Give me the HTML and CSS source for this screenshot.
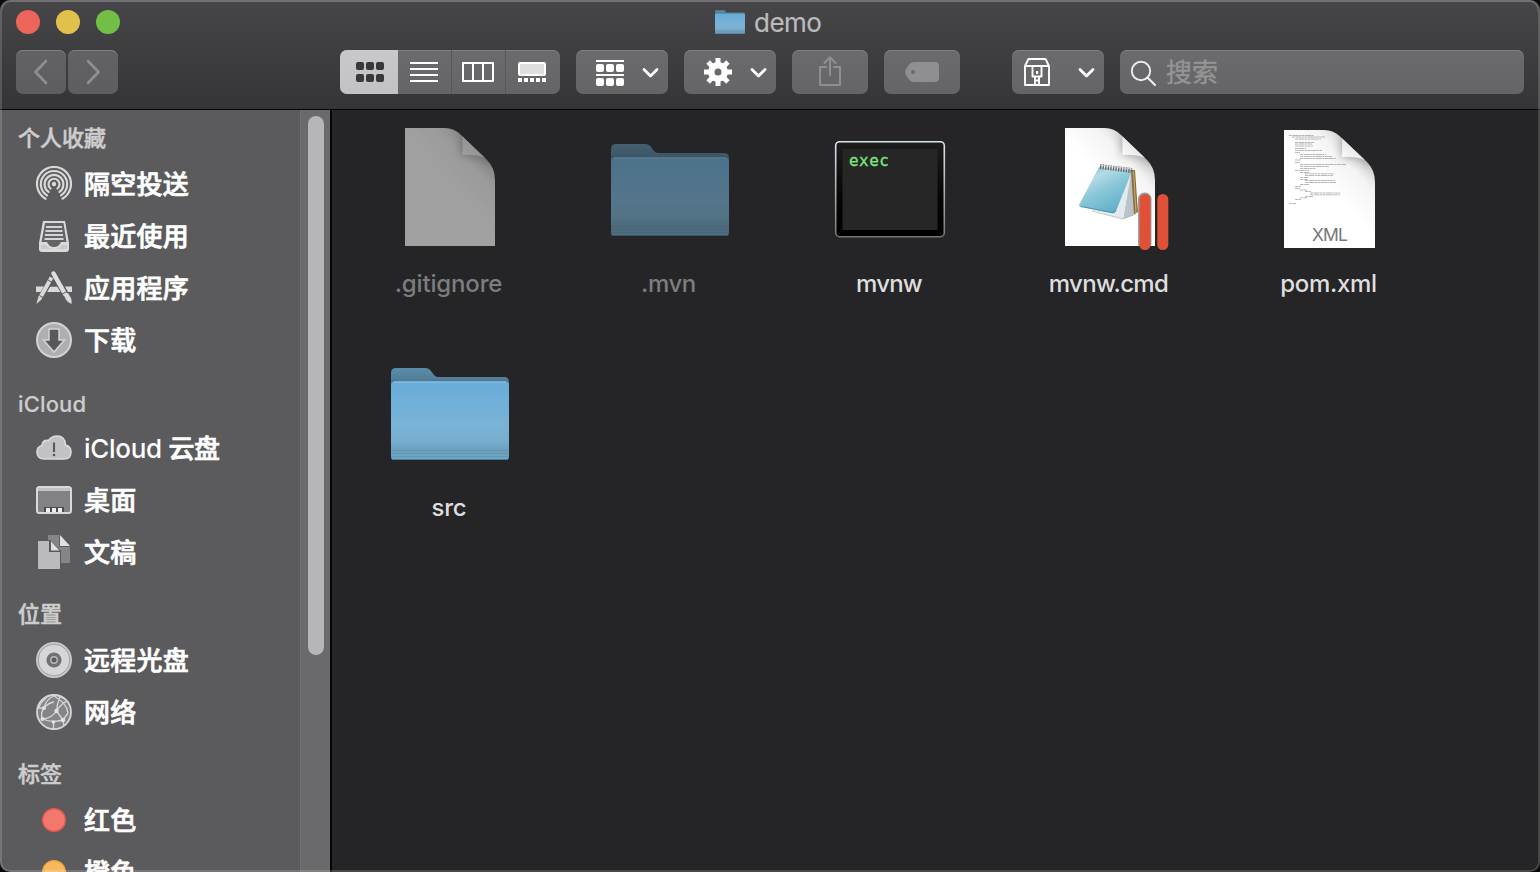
FILE: index.html
```html
<!DOCTYPE html>
<html lang="zh-CN">
<head>
<meta charset="utf-8">
<title>demo</title>
<link rel="stylesheet" href="styles.css">
</head>
<body>
<svg class="defs" width="0" height="0" aria-hidden="true">
  <defs>
    <linearGradient id="folderFront" x1="0" y1="0" x2="0" y2="1">
      <stop offset="0" stop-color="#68acd9"/><stop offset=".55" stop-color="#7ab3d6"/><stop offset=".76" stop-color="#76aecf"/><stop offset=".87" stop-color="#6c9fbc"/><stop offset="1" stop-color="#6fa6c4"/>
    </linearGradient>
    <linearGradient id="folderBack" x1="0" y1="0" x2="0" y2="1">
      <stop offset="0" stop-color="#5b8cab"/><stop offset=".25" stop-color="#53809b"/><stop offset=".4" stop-color="#4c7288"/><stop offset="1" stop-color="#4c7288"/>
    </linearGradient>
    <linearGradient id="paper" x1="0" y1="1" x2=".75" y2=".1">
      <stop offset=".6" stop-color="#fff"/><stop offset=".85" stop-color="#f4f4f4"/><stop offset="1" stop-color="#cfcfcf"/>
    </linearGradient>
    <linearGradient id="curl" x1="0" y1="1" x2=".6" y2=".4">
      <stop offset="0" stop-color="#fff"/><stop offset="1" stop-color="#e4e4e4"/>
    </linearGradient>
    <filter id="soft" x="-50%" y="-50%" width="200%" height="200%"><feGaussianBlur stdDeviation="4"/></filter>
    <clipPath id="paperClip"><path d="M0 0H40Q49 0 56 7L82 32Q90 40 90 52V118H0Z"/></clipPath>
    <symbol id="folder" viewBox="0 0 118 94" preserveAspectRatio="none">
      <path d="M0 6Q0 1 5 1H34Q38 1 40 4L43 8Q44.500 10 47 10H113Q118 10 118 15V40H0Z" fill="url(#folderBack)"/>
      <rect y="14.500" width="118" height="78.500" rx="3.500" fill="url(#folderFront)"/>
      <path d="M3 15H115" stroke="#91c9eb" stroke-width="1"/>
      <path d="M0 83.500H118M0 86.500H118M0 89.500H118" stroke="#6297b5" stroke-width="1"/>
      <path d="M1.500 92.500H116.500" stroke="#477d9d" stroke-width="1"/>
    </symbol>
    <symbol id="document" viewBox="0 0 90 118" preserveAspectRatio="none">
      <g clip-path="url(#paperClip)">
        <path d="M0 0H90V118H0Z" fill="url(#paper)"/>
        <path d="M56 4V28Q74 26 88 40V25Z" fill="#777" opacity=".5" filter="url(#soft)"/>
      </g>
      <path d="M57.500 8.500V27Q70 26 80 30Z" fill="url(#curl)"/>
    </symbol>
    <linearGradient id="exec" x1="0" y1="0" x2="0" y2="1"><stop offset="0" stop-color="#1d1d1d"/><stop offset=".6" stop-color="#050505"/><stop offset="1" stop-color="#000"/></linearGradient>
    <linearGradient id="execRim" x1="0" y1="0" x2="0" y2="1"><stop offset="0" stop-color="#dbe6ef"/><stop offset=".4" stop-color="#b4bac0"/><stop offset="1" stop-color="#777"/></linearGradient>
    <linearGradient id="pad" x1="0" y1="0" x2=".6" y2="1"><stop offset="0" stop-color="#6fb4c8"/><stop offset=".3" stop-color="#b4dbe6"/><stop offset=".55" stop-color="#8cc8d8"/><stop offset="1" stop-color="#5fb0c8"/></linearGradient>
  </defs>
</svg>

<div class="window">
  <header class="header">
    <div class="titlebar">
      <div class="lights"><span class="light close"></span><span class="light minimize"></span><span class="light maximize"></span></div>
      <div class="title"><svg class="title-icon" viewBox="0 0 118 94" preserveAspectRatio="none"><use href="#folder" width="118" height="94"/></svg><span class="title-text">demo</span></div>
    </div>
    <nav class="toolbar">
      <div class="nav-buttons">
        <button class="btn nav"><svg viewBox="16 50 50 44"><path d="M46 61L35.500 72L46 83" class="stroke dim" stroke-width="2.600"/></svg></button>
        <button class="btn nav"><svg viewBox="68 50 50 44"><path d="M88 61L98.500 72L88 83" class="stroke dim" stroke-width="2.600"/></svg></button>
      </div>
      <div class="btn views">
        <div class="view selected"><svg viewBox="340 50 58 44"><g fill="#38383a"><rect x="356" y="62" width="8" height="8" rx="2"/><rect x="366" y="62" width="8" height="8" rx="2"/><rect x="376" y="62" width="8" height="8" rx="2"/><rect x="356" y="74" width="8" height="8" rx="2"/><rect x="366" y="74" width="8" height="8" rx="2"/><rect x="376" y="74" width="8" height="8" rx="2"/></g></svg></div>
        <div class="view"><svg viewBox="398 50 54 44"><path d="M410 63H438M410 69H438M410 75H438M410 81H438" stroke="#fff" stroke-width="2"/></svg></div>
        <div class="view"><svg viewBox="452 50 54 44"><path d="M463 63H493V81H463ZM473 63V81M483 63V81" class="stroke" stroke-width="2"/></svg></div>
        <div class="view"><svg viewBox="506 50 54 44"><rect x="519" y="63" width="26" height="12" rx="1" fill="#dededf" stroke="#fff" stroke-width="2"/><path d="M518 80H546" stroke="#fff" stroke-width="4" stroke-dasharray="4 2"/></svg></div>
      </div>
      <button class="btn menu"><svg viewBox="576 50 92 44"><path d="M596 61H624M596 75H624" stroke="#fff" stroke-width="2"/><g fill="#fff"><rect x="596" y="64" width="8" height="8" rx="2"/><rect x="606" y="64" width="8" height="8" rx="2"/><rect x="616" y="64" width="8" height="8" rx="2"/><rect x="596" y="78" width="8" height="8" rx="2"/><rect x="606" y="78" width="8" height="8" rx="2"/><rect x="616" y="78" width="8" height="8" rx="2"/></g><path d="M644 69.500L650.500 76L657 69.500" class="stroke" stroke-width="2.800"/></svg></button>
      <button class="btn menu"><svg viewBox="684 50 92 44"><g stroke="#fff" stroke-width="5"><path d="M718 58V66M718 78V86M704 72H712M724 72H732M708.100 62.100L713 67M723 77L727.900 81.900M708.100 81.900L713 77M723 67L727.900 62.100"/></g><circle cx="718" cy="72" r="6.750" fill="none" stroke="#fff" stroke-width="6.500"/><path d="M752 69.500L758.500 76L765 69.500" class="stroke" stroke-width="2.800"/></svg></button>
      <button class="btn action"><svg viewBox="792 50 76 44"><path d="M826 67H820V85H840V67H834M830 75V58M824.500 63L830 57.200L835.500 63" class="stroke dim" stroke-width="2"/></svg></button>
      <button class="btn action"><svg viewBox="884 50 76 44"><path fill="#8f8f91" fill-rule="evenodd" d="M914 62H935Q939 62 939 66V78Q939 82 935 82H914Q911 82 909 79.500L906 75Q904.500 72 906 69L909 64.500Q911 62 914 62ZM915 72A2 2 0 1 0 911 72A2 2 0 1 0 915 72Z"/></svg></button>
      <button class="btn menu archive"><svg viewBox="1012 50 92 44"><path d="M1025 66H1049V85H1025ZM1025 66L1028.500 59H1045.500L1049 66M1032.500 66V76.500H1041.500V66M1035 77V85M1039 77V85" class="stroke" stroke-width="1.900"/><rect x="1036" y="71" width="2.200" height="3" fill="#fff"/><path d="M1035 80.500H1039" stroke="#fff" stroke-width="2"/><path d="M1080 69.500L1086.500 76L1093 69.500" class="stroke" stroke-width="2.800"/></svg></button>
      <label class="btn search"><svg viewBox="1120 50 40 44"><circle cx="1141" cy="71" r="9.200" class="stroke pale" stroke-width="1.900"/><path d="M1147.500 77.500L1155 85" class="stroke pale" stroke-width="2.200"/></svg><span class="search-text">搜索</span></label>
    </nav>
  </header>

  <main class="body">
    <aside class="sidebar">
      <div class="places">
        <section class="section">
          <h2 class="heading">个人收藏</h2>
          <div class="place"><svg class="place-icon" viewBox="0 0 36 36"><circle cx="18" cy="18" r="2.200" fill="#d9d9da"/><g class="stroke light-stroke" stroke-width="2.200"><path d="M14.500 22.200A5.500 5.500 0 1 1 21.500 22.200" transform="translate(0 .3)"/><path d="M12.600 26.200A9.400 9.400 0 1 1 23.400 26.200" transform="translate(0 -.3)"/><path d="M11 29.400A13.200 13.200 0 1 1 25 29.400"/><path d="M9.500 32.700A17 17 0 1 1 26.500 32.700"/></g></svg><span class="label">隔空投送</span></div>
          <div class="place"><svg class="place-icon" viewBox="0 0 36 36"><path d="M7 3H29L33 25V31Q33 34 30 34H6Q3 34 3 31V25Z" fill="#dadadb"/><path d="M9 5H27.500L30.500 24H25Q23 29 18 29T11 24H5.500Z" fill="#646466"/><path d="M10 9H26M9.500 13H26.500M9 17H27M8.500 21H27.500" stroke="#d5d5d7" stroke-width="1.800"/><path d="M5 27H10Q12 31 18 31T26 27H31V31H5Z" fill="#c9c9cb"/></svg><span class="label">最近使用</span></div>
          <div class="place"><svg class="place-icon" viewBox="0 0 36 36"><path d="M0 16.500H36V22H0Z" fill="#d9d9da"/><path d="M17.800 9L12.500 16.500H22Z" fill="#5c5c5e"/><path d="M17.800 4L30 25" stroke="#59595b" stroke-width="6.500"/><path d="M16 8L5 27" stroke="#59595b" stroke-width="5.500"/><path d="M15.500 7.500L4 28" stroke="#d9d9da" stroke-width="4"/><path d="M2.300 27L6 29L.5 34Z" fill="#d9d9da"/><path d="M17.500 3.500L29 24" stroke="#dedee0" stroke-width="4.500" stroke-linecap="round"/><path d="M28 25L32 23L35 28Q36 31 35.500 34Q31 32 29.500 29Z" fill="#d9d9da"/><path d="M26 24L31 21.500M3.500 25.500L8 28M12 10L17 13" stroke="#59595b" stroke-width="1"/></svg><span class="label">应用程序</span></div>
          <div class="place"><svg class="place-icon" viewBox="0 0 36 36"><circle cx="18" cy="18" r="17" fill="#afafb1" stroke="#d3d3d5" stroke-width="2"/><path d="M13 7H23V18H28.500L18 30L7.500 18H13Z" fill="#58585a" stroke="#d3d3d5" stroke-width="1.500"/></svg><span class="label">下载</span></div>
        </section>
        <section class="section">
          <h2 class="heading latin">iCloud</h2>
          <div class="place"><svg class="place-icon" viewBox="0 0 36 36"><path d="M8.500 29Q1 29 1 22Q1 16.500 6 15.500Q6.500 9.500 12.500 10.500Q15.500 6 21 6Q29 6 29.500 15Q35 16.500 35 22Q35 29 28 29Z" fill="#c2c2c4" stroke="#dadadc" stroke-width="1.600"/><path d="M18 12.500V22" stroke="#59595b" stroke-width="2.200"/><circle cx="18" cy="25" r="1.300" fill="#59595b"/></svg><span class="label cloud-label">iCloud <span class="cjk">云盘</span></span></div>
          <div class="place"><svg class="place-icon" viewBox="0 0 36 36"><rect x="1" y="5" width="34" height="26" rx="2.500" fill="#828284" stroke="#d9d9db" stroke-width="2"/><path d="M2 7.500H34" stroke="#c3c3c5" stroke-width="3"/><path d="M8 25H28V30H8Z" fill="#4b4b4d"/><path d="M10 28H26" stroke="#eee" stroke-width="4" stroke-dasharray="4 2"/></svg><span class="label">桌面</span></div>
          <div class="place"><svg class="place-icon" viewBox="0 0 36 36"><path d="M12 1H23V13H34V29H12Z" fill="#858587"/><path d="M24 1V12H34Z" fill="#e0e0e2"/><path d="M1 6H14L25 17V36H1Z" fill="#59595b"/><path d="M2 7H13V18H24V35H2Z" fill="#bbbbbd"/><path d="M15 7.500V16.500H23.500Z" fill="#e0e0e2"/></svg><span class="label">文稿</span></div>
        </section>
        <section class="section">
          <h2 class="heading">位置</h2>
          <div class="place"><svg class="place-icon" viewBox="0 0 36 36"><circle cx="18" cy="18" r="17" fill="#d6d6d8" stroke="#c9c9cb" stroke-width="2"/><circle cx="18" cy="18" r="15.800" fill="none" stroke="#929294" stroke-width=".8"/><circle cx="18" cy="18" r="7.600" fill="#717173"/><circle cx="18" cy="18" r="3.200" fill="#5c5c5e" stroke="#bababc" stroke-width="1.400"/></svg><span class="label">远程光盘</span></div>
          <div class="place"><svg class="place-icon" viewBox="0 0 36 36"><circle cx="18" cy="18" r="17" fill="#858587" stroke="#d6d6d8" stroke-width="1.800"/><path d="M18 2Q10 5 8 14Q4 19 6.500 25M10 4Q5 8 3 13M24 3Q21 10 20.500 17M31 7Q25 10 20.500 17Q16 24 7 25M2 14H8Q12 9 18 8M20.500 17L27 26M18 2Q31 9 32 19L27 26M6.500 25Q16 29 27 26M17.500 28V35M27 26L28 32" fill="none" stroke="#d9d9db" stroke-width="1.300"/><g fill="#e0e0e2"><circle cx="8" cy="14" r="2"/><circle cx="20.500" cy="17" r="2.200"/><circle cx="6.500" cy="25" r="2"/><circle cx="27" cy="26" r="2.300"/><circle cx="17.500" cy="28" r="1.800"/></g></svg><span class="label">网络</span></div>
        </section>
        <section class="section">
          <h2 class="heading">标签</h2>
          <div class="place"><svg class="place-icon" viewBox="0 0 36 36"><circle cx="18" cy="18" r="11.300" fill="#f2786e" stroke="#e9594d" stroke-width="1.400"/></svg><span class="label">红色</span></div>
          <div class="place"><svg class="place-icon" viewBox="0 0 36 36"><circle cx="18" cy="18" r="11.300" fill="#f6b961" stroke="#eda63e" stroke-width="1.400"/></svg><span class="label">橙色</span></div>
        </section>
      </div>
      <div class="track"><div class="thumb"></div></div>
    </aside>

    <div class="files">
      <div class="file hidden-file"><svg class="file-icon" viewBox="0 0 128 128"><use href="#document" x="19" y="4" width="90" height="118"/></svg><span class="name gitignore">.gitignore</span></div>
      <div class="file hidden-file"><svg class="file-icon" viewBox="0 0 128 128"><use href="#folder" x="5" y="19" width="118" height="94"/></svg><span class="name">.mvn</span></div>
      <div class="file"><svg class="file-icon" viewBox="0 0 128 128"><rect x="9.700" y="17.700" width="108.600" height="95" rx="4" fill="url(#exec)" stroke="url(#execRim)" stroke-width="1.600"/><rect x="16.500" y="25" width="95" height="81" fill="#262626"/><text x="23" y="42" class="exec-text" textLength="40">exec</text></svg><span class="name mvnw">mvnw</span></div>
      <div class="file"><svg class="file-icon" viewBox="0 0 128 128"><use href="#document" x="19" y="4" width="90" height="118"/>
        <path d="M84 46L89 46L92 88L86 92Z" fill="#8c713d"/><path d="M87.500 47L90 89" stroke="#c9ae73" stroke-width="1"/>
        <path d="M85 47L77 95L88 91Z" fill="#b9c3c8"/><path d="M46 86L77 95L85.500 48L68 80Z" fill="#e3eaee"/><path d="M46 87L77 95L87 91" fill="none" stroke="#aeb9be" stroke-width=".8"/>
        <path d="M53 43L86 47L70 87Q69 90 65 89L35 83Q32 82 33.500 80Z" fill="url(#pad)"/><path d="M35 82.500L66 88.500Q69 89 70 86" fill="none" stroke="#438ba2" stroke-width=".8"/>
        <path d="M54 42.500L86 46.500" stroke="#666" stroke-width="5" stroke-dasharray="1.400 1.200"/><path d="M54 41L86 45" stroke="#c9c9c9" stroke-width="1"/>
        <rect x="92" y="68.500" width="13.500" height="58" rx="6.500" fill="#444" opacity=".5"/><rect x="93.500" y="70" width="11" height="56" rx="5.500" fill="#e05036"/><rect x="111.300" y="70" width="11" height="56" rx="5.500" fill="#e05036"/></svg><span class="name cmd">mvnw.cmd</span></div>
      <div class="file"><svg class="file-icon" viewBox="0 0 128 128"><use href="#document" x="18" y="6" width="91" height="118"/><g class="code-lines" stroke="#777" stroke-width=".8" stroke-dasharray="3 .5 6 .4 2 .5" opacity=".65"><path d="M23 11.500H48M26 13H59M29 15H55M29 18.500H48M29 20H46M29 22H47M29 24.500H40M29 26.500H56M29 28.500H34M34 30.500H60M34 32.500H66M34 34.500H70M29 36H35M29 38.500H34M34 40.500H80M34 42.500H63M34 44.500H50M29 46.500H43M34 48.500H43M39 49.800H68M39 51.500H67M34 53.500H42M34 55.500H41M39 56.500H69M39 58.500H70M34 60.500H43M29 62.500H35M29 64.500H34M34 66H41M39 67.500H45M44 69H74M44 70.800H74M39 72.500H47M34 73.800H41M29 75.500H35M23 79.500H30"/></g><text x="64" y="117" class="xml-text" text-anchor="middle" textLength="36">XML</text></svg><span class="name pom">pom.xml</span></div>
      <div class="file"><svg class="file-icon" viewBox="0 0 128 128"><use href="#folder" x="5" y="19" width="118" height="94"/></svg><span class="name src">src</span></div>
    </div>
  </main>
</div>
</body>
</html>
```
FILE: styles.css
```css
* { box-sizing: border-box; }
body {
  margin: 0;
  background: #0b0b0b;
  font-family: Inter, "Noto Sans CJK SC", sans-serif;
  overflow: hidden;
}
.defs { position: absolute; }
svg { display: block; }
.stroke { fill: none; stroke: #fff; stroke-linecap: round; stroke-linejoin: round; }
.dim { stroke: #8f8f91; }
.pale { stroke: #ececec; }
.light-stroke { stroke: #d9d9da; }

.window {
  position: relative;
  display: flex;
  flex-direction: column;
  width: 1540px;
  height: 872px;
  border-radius: 10px;
  overflow: hidden;
  background: #252527;
}
/* Light rim over the window edge */
.window::after {
  content: "";
  position: absolute;
  inset: 0;
  border: solid rgba(255, 255, 255, .16);
  border-width: 0 2px 2px;
  border-radius: 10px;
  box-shadow: inset 0 2px 0 #707072;
  pointer-events: none;
}
.header {
  flex: none;
  height: 110px;
  border-bottom: 1px solid #060606;
  background: linear-gradient(#464648, #353537);
}
.titlebar { display: grid; grid-template-columns: 1fr auto 1fr; height: 50px; padding: 0 16px; }
.lights { display: flex; gap: 16px; padding-top: 10px; }
.light { width: 24px; height: 24px; border-radius: 50%; }
.close { background: #ed655a; }
.minimize { background: #e1c04c; }
.maximize { background: #72be47; }
.title { display: flex; align-items: flex-start; gap: 9px; padding: 10px 4px 0 0; color: #bbbbbc; }
.title-icon { width: 30px; height: 24px; }
.title-text { width: 67px; font-size: 26px; line-height: 26px; letter-spacing: -.5px; -webkit-text-stroke: .2px #bbbbbc; }

.toolbar { display: flex; gap: 16px; padding: 0 16px; height: 44px; }
.btn {
  display: flex;
  flex: none;
  height: 44px;
  padding: 0;
  border: 0;
  border-radius: 7px;
  background: linear-gradient(#6b6b6d, #656567);
  box-shadow: inset 0 1px 0 #7f7f81;
  overflow: hidden;
}
.btn svg { width: 100%; height: 44px; }
.nav-buttons { display: flex; gap: 2px; margin-right: 206px; }
.nav { width: 50px; background: linear-gradient(#626264, #5e5e60); }
.views { width: 220px; }
.view { width: 54px; box-shadow: inset -1px 0 #58585a; }
.view.selected { width: 58px; background: linear-gradient(#c9c9cb, #c2c2c4); box-shadow: none; }
.view:last-child { box-shadow: none; }
.menu { width: 92px; }
.action { width: 76px; }
.archive { margin-left: 36px; }
.btn.search { flex: 1; }
.search svg { width: 40px; flex: none; }
.search-text { margin-left: 6px; font-size: 26px; line-height: 46px; color: #949496; -webkit-text-stroke: .4px #949496; }

.body { display: flex; flex: 1; min-height: 0; }
.sidebar {
  display: flex;
  flex: none;
  width: 332px;
  border-right: 2px solid #050505;
  background: #5b5b5d;
  overflow: hidden;
}
.places { flex: 1; padding-top: 8px; }
.section { margin-bottom: 16px; }
.heading {
  height: 40px;
  margin: 0;
  padding-left: 18px;
  font-size: 22px;
  font-weight: 500;
  line-height: 40px;
  color: #cdcdce;
  -webkit-text-stroke: .5px #cdcdce;
}
.heading.latin { line-height: 44px; letter-spacing: .15px; -webkit-text-stroke: .15px #cdcdce; }
.place {
  display: flex;
  align-items: center;
  gap: 12px;
  height: 52px;
  padding-left: 36px;
  font-size: 26px;
  font-weight: 500;
  color: #fff;
  white-space: nowrap;
}
.label { padding-top: 2px; letter-spacing: .25px; line-height: 50px; -webkit-text-stroke: .7px #fff; }
.place-icon { flex: none; width: 36px; height: 36px; }
.cloud-label { letter-spacing: -.3px; -webkit-text-stroke: 0; }
.cjk { -webkit-text-stroke: .7px #fff; }
.track { flex: none; width: 30px; padding: 6px 0 0 7px; border-left: 1px solid #717173; background: #6a6a6c; }
.thumb { width: 16px; height: 539px; border-radius: 8px; background: #b6b6b8; }

.files {
  display: grid;
  grid-template-columns: repeat(5, 220px);
  grid-auto-rows: 224px;
  align-content: start;
  flex: 1;
  padding: 14px 0 0 8px;
}
.file { display: flex; flex-direction: column; align-items: center; }
.file-icon { width: 128px; height: 128px; overflow: visible; }
.name {
  margin: 16px 3px 0 0;
  font-size: 24px;
  font-weight: 500;
  line-height: 32px;
  letter-spacing: -.4px;
  color: #dededf;
}
.name.gitignore { letter-spacing: -.15px; }
.name.mvnw { margin-right: 2px; letter-spacing: -.8px; }
.name.cmd { letter-spacing: -.65px; }
.name.pom { letter-spacing: -.3px; }
.name.src { margin-right: 2px; letter-spacing: -.2px; }
.hidden-file .file-icon { opacity: .57; }
.hidden-file .name { color: #7d7d7f; }
.exec-text { font: 16px "DejaVu Sans Mono", monospace; fill: #7de779; stroke: #7de779; stroke-width: .3px; }
.xml-text { font: 17.500px Inter, sans-serif; fill: #777; }
```
